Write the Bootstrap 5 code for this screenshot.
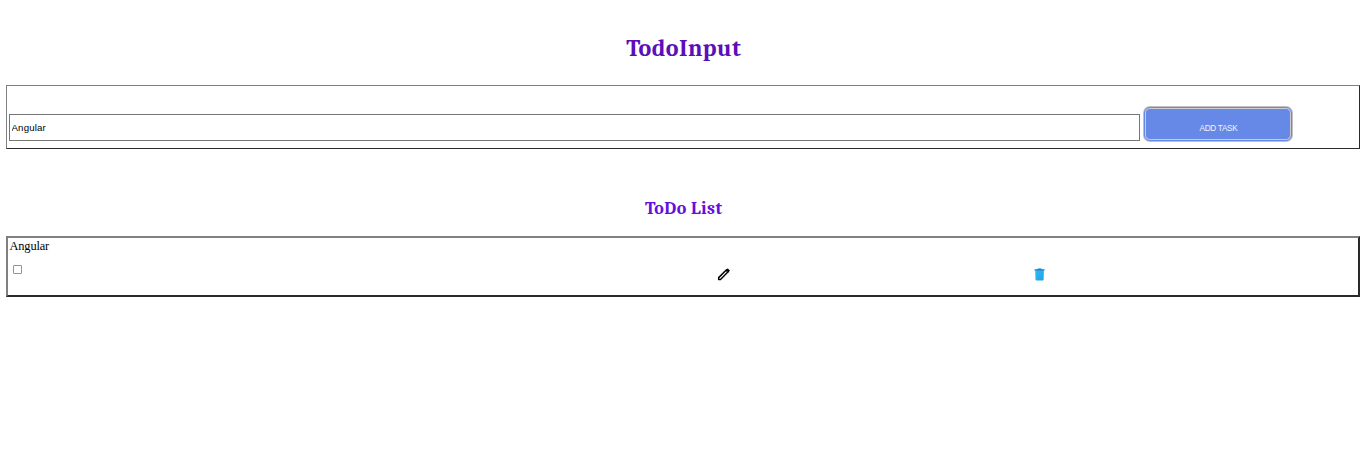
<!DOCTYPE html>
<html lang="en">
<head>
<meta charset="utf-8">
<meta name="viewport" content="width=device-width, initial-scale=1">
<title>TodoInput</title>
<link href="https://cdn.jsdelivr.net/npm/bootstrap@5.3.0/dist/css/bootstrap.min.css" rel="stylesheet">
<style>
  body { padding: 33px 6px 0; color: #000; font-family: "Liberation Serif", serif; background: #fff; }
  h1, h2 { font-family: Cambria, Caladea, "Noto Serif", "Liberation Serif", serif; font-weight: 700; letter-spacing: .4px; padding-left: 1.4px; }
  h1 { font-size: 24px; line-height: 30px; color: #5b0fbb; margin-bottom: 22px; }
  h2 { font-size: 18px; line-height: 24px; color: #640fdc; margin: 48px 0 15px; }
  .todo-form { height: 64px; border: 1px solid; border-color: #808084 #2b2b2f #2b2b2f #808084; padding: 0 68px 7px 2px; }
  .task-input { height: 27px; border: 1px solid #767676; border-radius: 0; padding: 1px 1.5px; color: #000; font: 9.7px/13px "Liberation Sans", sans-serif; letter-spacing: .15px; }
  .task-input:focus { border-color: #767676; }
  .add-btn { width: 146px; height: 32px; margin: 0 0 1px 5px; padding: 9px 0 0 1px; border: 1px solid #cdccd2; border-radius: 5px; outline: 1px solid #6587e6; background: #6689e7; box-shadow: 0 0 0 2px #bfc0c5; color: #f1f4fc; font: 8.2px/10px "Liberation Sans", sans-serif; letter-spacing: -.3px; }
  .todo-item { height: 61px; border: 2px solid; border-color: #808080 #2b292b #2b292b #808080; }
  .task-name { font-size: 12.4px; line-height: 15px; padding: 1px 0 0 1.5px; letter-spacing: -.15px; }
  .form-check-input.task-check { width: 9px; height: 9px; margin: 11px 0 0 5px; border: 1px solid #949494; border-radius: 1px; float: none; }
  .icon-cell { padding-top: 13px; }
  .icon-cell svg { display: block; }
  .check-cell { width: 709px; }
  .edit-cell { width: 317px; }
</style>
</head>
<body>
<h1 class="text-center">TodoInput</h1>
<form class="todo-form d-flex align-items-end">
  <input class="task-input form-control flex-grow-1 shadow-none" type="text" value="Angular" aria-label="Task">
  <button class="add-btn btn flex-shrink-0" type="button">ADD TASK</button>
</form>
<h2 class="text-center">ToDo List</h2>
<section class="todo-item">
  <div class="task-name">Angular</div>
  <div class="d-flex align-items-start">
    <div class="check-cell d-flex"><input class="task-check form-check-input" type="checkbox" aria-label="Done"></div>
    <div class="edit-cell icon-cell">
      <svg width="14" height="16" viewBox="-.1 .4 14.4 16.4" aria-label="Edit"><path d="M1.6 13.2v-1.9L9.7 3.2l1.9 1.9-8.1 8.1z" fill="#fff" stroke="#000" stroke-width="1.5" stroke-linejoin="round"/><path d="M8.5 4.1 10.5 2.1Q10.9 1.8 11.3 2.1L12.9 3.7Q13.2 4.1 12.9 4.5L10.9 6.5z"/><path d="M9.5 4.4l.9.9" stroke="#fff" stroke-width=".5"/></svg>
    </div>
    <div class="icon-cell">
      <svg width="12" height="16" viewBox="0 0 12 16" aria-label="Delete"><defs><linearGradient id="bin" x2="1" y2="1"><stop stop-color="#32bdf2"/><stop offset="1" stop-color="#1ba0e6"/></linearGradient></defs><path d="M1.2 3h8.7l-.3 9.7q-.1.8-.9.8H2.4q-.8 0-.9-.8z" fill="url(#bin)"/><path d="M.5 2.2h2.8l.5-.8h3.5l.5.8h2.8v1.4H.5z" fill="#1681d2"/></svg>
    </div>
  </div>
</section>
<script src="https://cdn.jsdelivr.net/npm/bootstrap@5.3.0/dist/js/bootstrap.bundle.min.js"></script>
</body>
</html>
